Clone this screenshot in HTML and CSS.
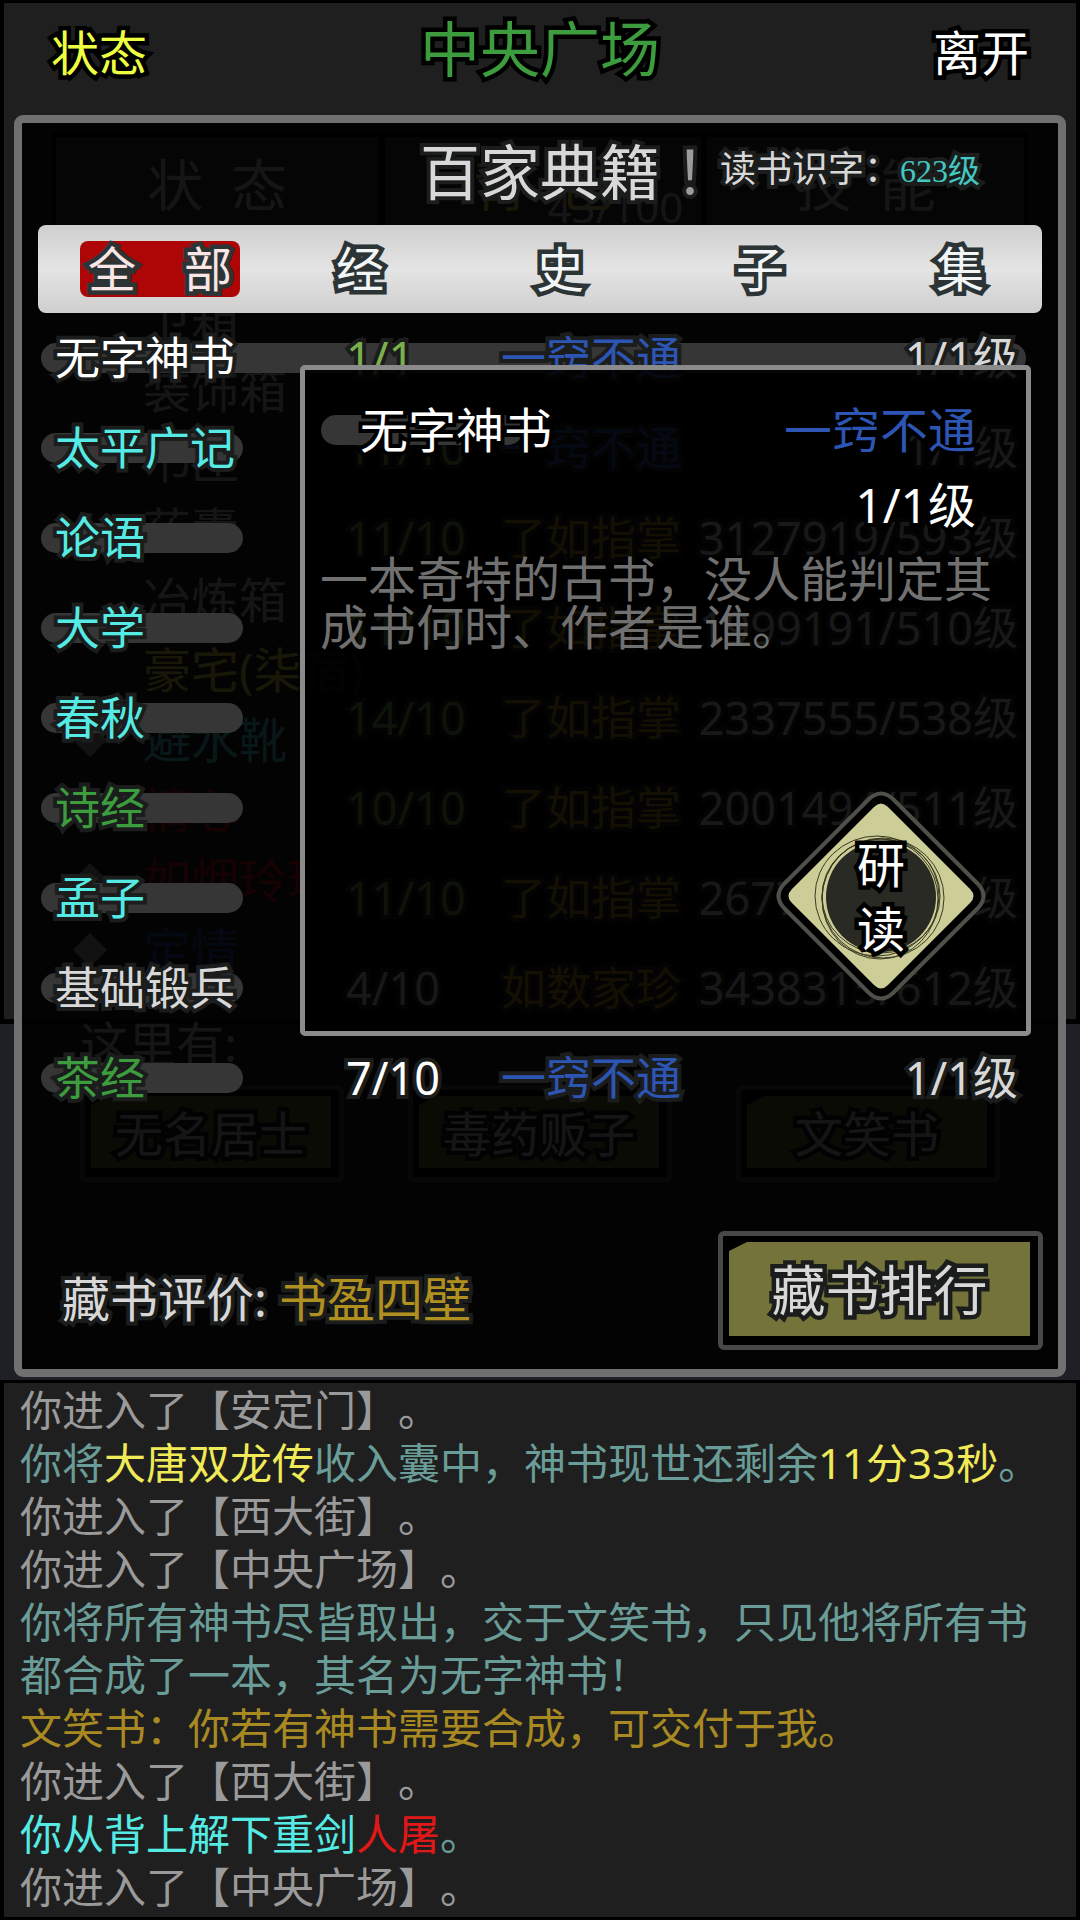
FILE: index.html
```
<!DOCTYPE html>
<html lang="zh-CN">
<head>
    <meta charset="UTF-8">
    <meta name="viewport" content="width=device-width, initial-scale=1.0">
    <title>中央广场 - 百家典籍</title>
    <link rel="stylesheet" href="styles.css">
</head>
<body>
    <div class="stage">
        <!-- the square itself, dimmed by the library panel -->
        <div class="place">
            <div class="place-frame">
                <header class="place-header">
                    <button type="button" class="link-btn status-btn">状态</button>
                    <h1>中央广场</h1>
                    <button type="button" class="link-btn leave-btn">离开</button>
                </header>
                <div class="place-tabs">
                    <span>状&ensp;态</span>
                    <span class="bag-tab">背&ensp;包<small>43/100</small></span>
                    <span>技&ensp;能</span>
                </div>
                <ul class="bag">
                    <li>卫箱</li>
                    <li>装饰箱</li>
                    <li>书匣</li>
                    <li>药囊</li>
                    <li>冶炼箱</li>
                    <li class="yellow">豪宅(柒宿)</li>
                    <li class="cyan mark">避水靴</li>
                    <li class="red">情心</li>
                    <li class="red mark">如烟玲珑</li>
                    <li class="blue mark">定情</li>
                </ul>
            </div>
            <div class="room">
                <p>这里有:</p>
                <div class="people">
                    <button type="button" class="plate small"><span>无名居士</span></button>
                    <button type="button" class="plate small"><span>毒药贩子</span></button>
                    <button type="button" class="plate small"><span>文笑书</span></button>
                </div>
            </div>
        </div>

        <section class="library">
            <div class="library-title">
                <h2>百家典籍<span class="bang" lang="zh-TW">！</span></h2>
                <p class="literacy">读书识字：<span class="literacy-level">623级</span></p>
            </div>

            <nav class="tabs">
                <button type="button" class="tab active">全　部</button>
                <button type="button" class="tab">经</button>
                <button type="button" class="tab">史</button>
                <button type="button" class="tab">子</button>
                <button type="button" class="tab">集</button>
            </nav>

            <div class="shelf">
                <table class="books">
                    <colgroup>
                        <col class="col-name">
                        <col class="col-count">
                        <col class="col-mastery">
                        <col class="col-level">
                    </colgroup>
                    <tbody>
                        <tr class="selected">
                            <td class="name white">无字神书</td>
                            <td class="lime">1/1</td>
                            <td class="blue">一窍不通</td>
                            <td class="level">1/1级</td>
                        </tr>
                        <tr>
                            <td class="name cyan">太平广记</td>
                            <td class="lime">11/10</td>
                            <td class="blue">一窍不通</td>
                            <td class="level">1/1级</td>
                        </tr>
                        <tr>
                            <td class="name cyan">论语</td>
                            <td class="lime">11/10</td>
                            <td class="gold">了如指掌</td>
                            <td class="level">3127919/593级</td>
                        </tr>
                        <tr>
                            <td class="name cyan">大学</td>
                            <td class="lime">11/10</td>
                            <td class="gold">了如指掌</td>
                            <td class="level">1999191/510级</td>
                        </tr>
                        <tr>
                            <td class="name cyan">春秋</td>
                            <td class="lime">14/10</td>
                            <td class="gold">了如指掌</td>
                            <td class="level">2337555/538级</td>
                        </tr>
                        <tr>
                            <td class="name green">诗经</td>
                            <td class="lime">10/10</td>
                            <td class="gold">了如指掌</td>
                            <td class="level">2001494/511级</td>
                        </tr>
                        <tr>
                            <td class="name cyan">孟子</td>
                            <td class="lime">11/10</td>
                            <td class="gold">了如指掌</td>
                            <td class="level">2677555/564级</td>
                        </tr>
                        <tr>
                            <td class="name">基础锻兵</td>
                            <td>4/10</td>
                            <td class="gold">如数家珍</td>
                            <td class="level">3438315/612级</td>
                        </tr>
                        <tr>
                            <td class="name green">茶经</td>
                            <td class="white">7/10</td>
                            <td class="blue">一窍不通</td>
                            <td class="level">1/1级</td>
                        </tr>
                    </tbody>
                </table>

                <div class="popup">
                    <div class="popup-head">
                        <h3>无字神书</h3>
                        <span class="blue">一窍不通</span>
                    </div>
                    <p class="popup-level">1/1级</p>
                    <p class="popup-text">一本奇特的古书，没人能判定其成书何时、作者是谁。</p>
                    <button type="button" class="study">
                        <svg viewBox="0 0 210 210" aria-hidden="true">
                            <path class="rim" d="M93 8 Q105 -3 117 8 L202 93 Q213 105 202 117 L117 202 Q105 213 93 202 L8 117 Q-3 105 8 93 Z"/>
                            <path class="face" d="M98 16 Q105 9 112 16 L194 98 Q201 105 194 112 L112 194 Q105 201 98 194 L16 112 Q9 105 16 98 Z"/>
                            <circle class="disc" cx="105" cy="106" r="55"/>
                            <ellipse class="ring" cx="101" cy="105" rx="62" ry="60"/>
                            <ellipse class="ring" cx="107" cy="107" rx="61" ry="60"/>
                            <ellipse class="ring" cx="104" cy="108" rx="58" ry="60"/>
                            <ellipse class="ring" cx="105" cy="105" rx="59" ry="57"/>
                        </svg>
                        <span>研<br>读</span>
                    </button>
                </div>
            </div>

            <footer class="library-foot">
                <p>藏书评价:<span class="gold">书盈四壁</span></p>
                <button type="button" class="plate"><span>藏书排行</span></button>
            </footer>
        </section>
    </div>

    <div class="log">
        <p>你进入了【安定门】。</p>
        <p class="teal">你将<span class="yellow">大唐双龙传</span>收入囊中，神书现世还剩余<span class="yellow">11分33秒</span>。</p>
        <p>你进入了【西大街】。</p>
        <p>你进入了【中央广场】。</p>
        <p class="teal">你将所有神书尽皆取出，交于文笑书，只见他将所有书都合成了一本，其名为无字神书！</p>
        <p class="gold">文笑书：你若有神书需要合成，可交付于我。</p>
        <p>你进入了【西大街】。</p>
        <p class="teal"><span class="cyan">你从背上解下重剑</span><span class="red">人屠</span>。</p>
        <p>你进入了【中央广场】。</p>
    </div>
</body>
</html>
```
FILE: styles.css
```
:root {
    --frame-bg: #1f1f1f;
    --page-bg: #1f2026;
    --light: #d8d8d8;
    --outline: #1b1d1d;
    --cyan: #55ebe4;
    --green: #3d9c3d;
    --lime: #7bb04c;
    --blue: #2d55b4;
    --gold: #b0901f;
    --yellow: #f0ea58;
    --red: #e01818;
}

* {
    box-sizing: border-box;
}

body {
    margin: 0;
    min-height: 100vh;
    display: flex;
    flex-direction: column;
    background: var(--page-bg);
    color: var(--light);
    font-family: 'Noto Sans', 'Noto Sans CJK SC', sans-serif;
    text-spacing-trim: space-all;
}

h1, h2, h3, p, ul {
    margin: 0;
    padding: 0;
    font-weight: normal;
}

button {
    padding: 0;
    border: 0;
    background: none;
    color: inherit;
    font-family: inherit;
    cursor: pointer;
}

.white { color: #fff; }
.cyan { color: var(--cyan); }
.green { color: var(--green); }
.lime { color: var(--lime); }
.blue { color: var(--blue); }
.gold { color: var(--gold); }
.yellow { color: var(--yellow); }
.red { color: var(--red); }

/* place and library share one grid cell, the library on top */
.stage {
    display: grid;
}

.place,
.library {
    grid-area: 1 / 1;
}

/* place */
.place-frame {
    border: solid #000;
    border-width: 3px 4px 5px;
    background: var(--frame-bg);
    height: 1024px;
}

.place-header {
    display: flex;
    justify-content: space-between;
    padding: 0 47px;
    height: 112px;
    -webkit-text-stroke: 9px #000;
    paint-order: stroke fill;
}

.place-header h1 {
    font-size: 60px;
    line-height: 92px;
    color: var(--green);
}

.link-btn {
    height: 100px;
    font-size: 48px;
    line-height: 100px;
    -webkit-text-stroke: 9px #000;
    paint-order: stroke fill;
}

.status-btn {
    color: #eeff41;
}

.leave-btn {
    color: #fff;
}

.place-tabs {
    display: grid;
    grid-template-columns: 1fr 1fr 1fr;
    margin: 18px 48px 0;
    height: 100px;
    border: 4px solid #000;
    background: #333;
    font-size: 56px;
    line-height: 94px;
    text-align: center;
}

.place-tabs span + span {
    border-left: 6px solid #000;
}

.bag-tab {
    position: relative;
    color: var(--yellow);
}

.bag-tab small {
    position: absolute;
    right: 18px;
    bottom: 6px;
    font-size: 42px;
    line-height: 36px;
    color: var(--light);
}

.bag {
    margin-top: 52px;
    list-style: none;
    font-size: 48px;
    line-height: 70px;
}

.bag li {
    display: flex;
    align-items: center;
    padding-left: 139px;
    height: 70px;
}

.bag .mark::before {
    content: '';
    width: 24px;
    height: 24px;
    margin: 0 41px 0 -65px;
    background: #bbb;
    transform: rotate(45deg);
}

.room {
    padding: 0 80px;
    font-size: 48px;
}

.room p {
    height: 61px;
    line-height: 40px;
}

.people {
    display: flex;
    justify-content: space-between;
}

/* olive button with a clipped corner */
.plate {
    width: 325px;
    height: 119px;
    padding: 6px 8px 9px 6px;
    border: 5px solid #484848;
    border-radius: 6px;
    background: #000;
    font-size: 54px;
}

.plate span {
    display: block;
    height: 94px;
    line-height: 96px;
    background: #73733a;
    clip-path: polygon(18px 0, 100% 0, 100% 100%, 0 100%, 0 9px);
    -webkit-text-stroke: 9px var(--outline);
    paint-order: stroke fill;
}

.plate.small {
    width: 264px;
    height: 97px;
    font-size: 48px;
}

.plate.small span {
    height: 72px;
    line-height: 76px;
}

/* library panel */
.library {
    margin: 115px 14px 3px;
    border: 8px solid #707070;
    border-radius: 9px;
    background: rgba(0, 0, 0, 0.9);
    -webkit-text-stroke: 8px var(--outline);
    paint-order: stroke fill;
    z-index: 1;
}

.library-title {
    display: flex;
    justify-content: flex-end;
    align-items: center;
    height: 102px;
    padding: 0 78px 8px 0;
}

.library-title h2 {
    font-size: 60px;
    line-height: 80px;
}

/* the traditional face centres its full-width punctuation */
.bang {
    font-family: 'Noto Sans CJK TC', sans-serif;
    color: #9c9c9c;
}

.literacy {
    font-size: 36px;
    line-height: 60px;
}

.literacy-level {
    font-family: 'Liberation Serif', 'Noto Sans CJK SC', serif;
    font-size: 32px;
    color: #45c8c2;
}

.tabs {
    display: grid;
    grid-template-columns: repeat(5, 1fr);
    align-items: center;
    gap: 40px;
    height: 88px;
    margin: 0 16px;
    padding: 0 2px 0 42px;
    border-radius: 8px;
    background: linear-gradient(#cfcfcf, #e4e4e4 50%, #cfcfcf);
}

.tab {
    height: 56px;
    border-radius: 8px;
    font-size: 48px;
    line-height: 56px;
    color: #f2f6f6;
    -webkit-text-stroke: 9px #2d3436;
    paint-order: stroke fill;
}

.tab.active {
    background: #ae0606;
    color: #fbe6e6;
}

.shelf {
    position: relative;
    padding: 0 32px 0 19px;
}

.books {
    width: 100%;
    table-layout: fixed;
    border-collapse: collapse;
    isolation: isolate;
    font-size: 45px;
    line-height: 60px;
}

.col-name { width: 305px; }
.col-count { width: 155px; }
.col-mastery { width: 180px; }

.books tr {
    position: relative;
    height: 90px;
}

.books td {
    padding: 0;
    white-space: nowrap;
}

.books .name {
    padding-left: 14px;
}

.books .name::before {
    content: '';
    position: absolute;
    z-index: -1;
    left: 0;
    top: 30px;
    width: 202px;
    height: 30px;
    border-radius: 15px;
    background: #363636;
}

.books .selected .name::before {
    width: 100%;
}

.books .level {
    padding-right: 8px;
    text-align: right;
}

/* book details */
.popup {
    position: absolute;
    top: 52px;
    left: 278px;
    right: 27px;
    height: 671px;
    padding: 30px 30px 0 15px;
    border: 5px solid #8b8b8b;
    border-radius: 5px;
    background: rgba(0, 0, 0, 0.89);
    font-size: 48px;
    -webkit-text-stroke: 8px #000;
}

.popup-head {
    display: flex;
    justify-content: space-between;
    line-height: 60px;
    padding-right: 20px;
}

.popup-head h3 {
    position: relative;
    z-index: 0;
    padding-left: 40px;
    font-size: 48px;
    color: #fff;
}

.popup-head h3::before {
    content: '';
    position: absolute;
    z-index: -1;
    left: 1px;
    top: 15px;
    width: 202px;
    height: 30px;
    border-radius: 15px;
    background: #363636;
}

.popup-level {
    margin-top: 15px;
    padding-right: 20px;
    line-height: 60px;
    text-align: right;
    color: #fff;
}

.popup-text {
    margin-top: 20px;
    line-height: 48px;
    color: #707070;
    -webkit-text-stroke: 0;
}

.study {
    position: absolute;
    right: 40px;
    bottom: 30px;
    width: 210px;
    height: 210px;
}

.study svg {
    display: block;
    width: 100%;
    height: 100%;
    paint-order: normal;
}

.study .rim {
    fill: #000;
    stroke: #50504a;
    stroke-width: 4px;
}

.study .face {
    fill: #cdcd97;
}

.study .disc {
    fill: #2a2a24;
}

.study .ring {
    fill: none;
    stroke: #3a3a22;
    stroke-width: 1px;
}

.study span {
    position: absolute;
    inset: 42px 0 0;
    font-size: 48px;
    line-height: 64px;
    color: #fff;
    -webkit-text-stroke: 9px #000;
    paint-order: stroke fill;
}

.library-foot {
    display: flex;
    justify-content: space-between;
    align-items: flex-end;
    margin: 108px 15px 19px 40px;
    font-size: 48px;
}

.library-foot p {
    line-height: 102px;
}

.library-foot .gold {
    margin-left: 12px;
}

/* message log */
.log {
    flex: 1;
    padding: 0 16px;
    border: solid #000;
    border-width: 3px 4px;
    background: var(--frame-bg);
    font-size: 42px;
    line-height: 53px;
    color: #9a9a9a;
}

.log .teal {
    color: #6a9c98;
}

.log .gold {
    color: #a98a22;
}
```
